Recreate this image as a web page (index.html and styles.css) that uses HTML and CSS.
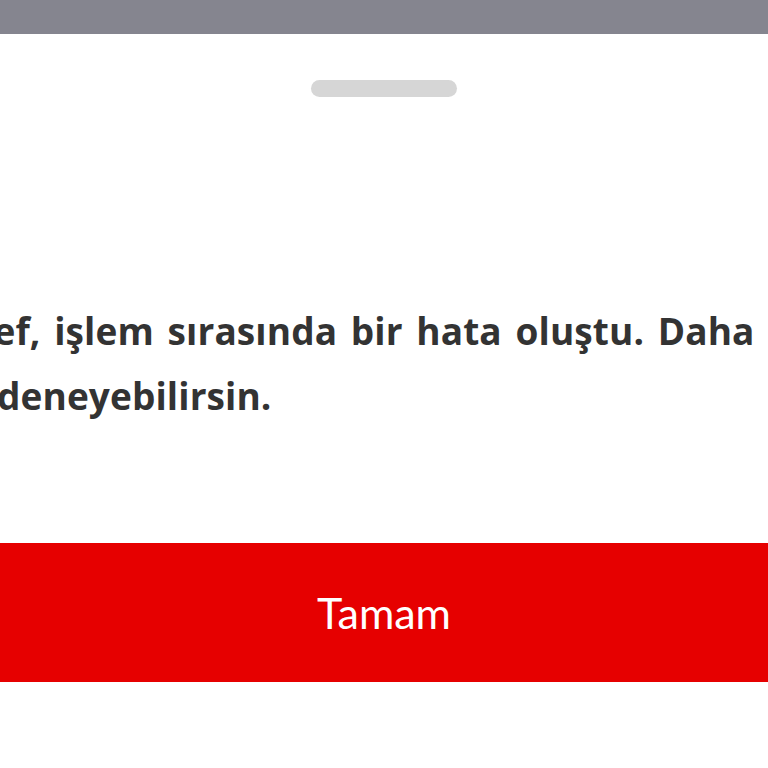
FILE: index.html
```html
<!DOCTYPE html>
<html>
<head>
    <meta charset="UTF-8">
    <title>Hata</title>
    <link rel="stylesheet" href="styles.css">
</head>
<body>
    <div class="backdrop"></div>
    <div class="sheet">
        <div class="handle"></div>
        <p class="message">Şef, işlem sırasında bir hata oluştu. Daha sonra tekrar<br>deneyebilirsin.</p>
        <button class="ok">Tamam</button>
    </div>
</body>
</html>
```

FILE: styles.css
```css
html, body, p{margin: 0;padding: 0;}
body{font-family: "Open Sans", Lato, sans-serif;background: #fff;overflow: hidden;width: 768px;height: 768px;}
.backdrop{height: 34px;background: #85858f;}
.sheet{display: flex;flex-direction: column;align-items: center;}
.handle{width: 146px;height: 17px;margin-top: 46px;border-radius: 9px;background: #d6d6d6;}
.message{align-self: stretch;margin-top: 201px;margin-left: -3px;white-space: nowrap;text-indent: -24px;font-size: 37px;line-height: 65px;font-weight: 700;word-spacing: 4px;letter-spacing: 0.1px;color: #333;}
.ok{align-self: stretch;height: 139px;margin-top: 115px;border: 0;background: #e60000;color: #fff;font-family: Lato, "Noto Sans", sans-serif;font-size: 43px;font-weight: 400;}
```
